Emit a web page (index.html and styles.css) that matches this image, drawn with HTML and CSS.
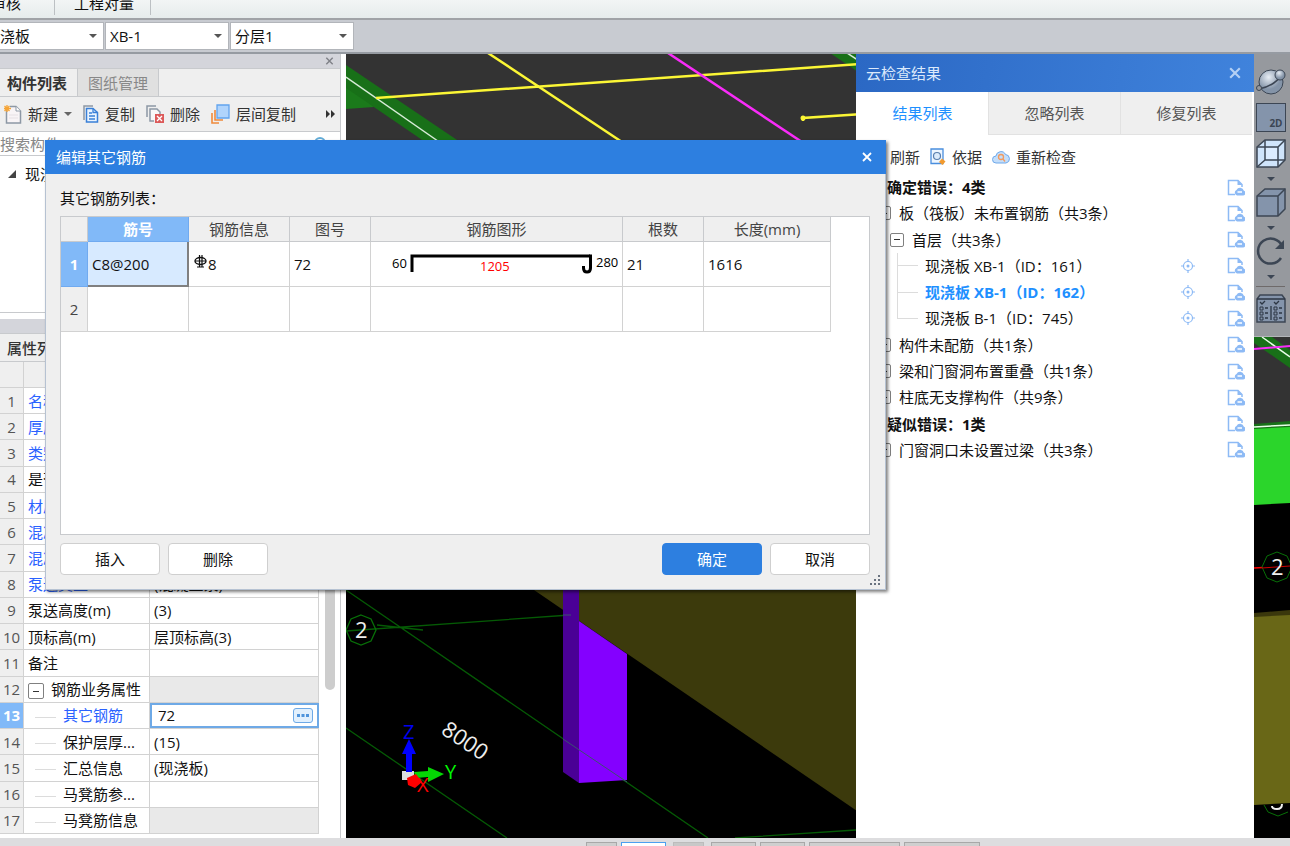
FILE: index.html
```html
<!DOCTYPE html>
<html lang="zh-CN">
<head>
    <meta charset="UTF-8">
    <meta name="viewport" content="width=device-width, initial-scale=1.0">
    <title>编辑其它钢筋</title>
    <link rel="stylesheet" href="styles.css">
</head>
<body>
    <!-- shared icons -->
    <svg class="sprite" width="0" height="0" aria-hidden="true">
        <symbol id="icon-ignore" viewBox="0 0 18 17">
            <path d="M8 15.500H1.500V1.500h9.500l4 4V8" fill="none" stroke="#8dbaf5" stroke-width="1.500"/>
            <path d="M10.500 1v5H15z" fill="#8dbaf5"/>
            <path d="M10 16.500a3 3 0 0 1-.5-5.600 4 4 0 0 1 7.400.8 2.500 2.500 0 0 1-.9 4.800z" fill="#8dbaf5"/>
            <path d="M10.500 13h4.500" stroke="#fff" stroke-width="1.500"/>
        </symbol>
        <symbol id="icon-locate" viewBox="0 0 14 14">
            <circle cx="7" cy="7" r="4.500" fill="none" stroke="#8dbaf5" stroke-width="1.200"/>
            <circle cx="7" cy="7" r="1.500" fill="#8dbaf5"/>
            <path d="M7 0v3M7 11v3M0 7h3M11 7h3" stroke="#8dbaf5" stroke-width="1.200"/>
        </symbol>
        <symbol id="icon-close" viewBox="0 0 10 10">
            <path d="M1 1l8 8M9 1L1 9" fill="none" stroke="currentColor" stroke-width="1.800"/>
        </symbol>
    </svg>

    <nav class="ribbon">
        <button>审核</button>
        <button>工程对量</button>
    </nav>

    <div class="selector-bar">
        <label class="combo"><select aria-label="构件类型"><option>现浇板</option></select></label>
        <label class="combo"><select aria-label="构件"><option>XB-1</option></select></label>
        <label class="combo"><select aria-label="分层"><option>分层1</option></select></label>
    </div>

    <main class="workspace">
        <aside class="sidebar">
            <section class="dock">
                <div class="dock-title">
                    <button aria-label="关闭"><svg width="9" height="8"><use href="#icon-close"/></svg></button>
                </div>
                <div class="dock-tabs">
                    <button class="active">构件列表</button>
                    <button>图纸管理</button>
                </div>
                <div class="toolbar">
                    <button>
                        <svg width="18" height="19" viewBox="0 0 18 19">
                            <path d="M2.500 3.500V18h14V6L12 1.500H6" fill="#f8f4f6" stroke="#8d98a5" stroke-width="1.500"/>
                            <path d="M12 1.500V6h4.500" fill="#fff" stroke="#8d98a5"/>
                            <path d="M5 10h9M5 13h9" stroke="#e6e0e4"/>
                            <path d="M3 0v7M0 3.500h7M.5 1l5 5M5.500 1l-5 5" stroke="#f6a537" stroke-width="1.300"/>
                        </svg>
                        新建<i class="caret"></i>
                    </button>
                    <button>
                        <svg width="16" height="18" viewBox="0 0 16 18">
                            <path d="M1 15V1h9" fill="none" stroke="#8d98a5" stroke-width="1.500"/>
                            <path d="M3.500 3.500H10l4.500 4V17h-11z" fill="#eaf4ff" stroke="#3a80d8" stroke-width="1.500"/>
                            <path d="M10 3.500v4h4.500M6 8h3M6 11h6M6 14h6" fill="none" stroke="#3a80d8" stroke-width="1.300"/>
                        </svg>
                        复制
                    </button>
                    <button>
                        <svg width="18" height="18" viewBox="0 0 18 18">
                            <path d="M1 12V1h9" fill="none" stroke="#8d98a5" stroke-width="1.500"/>
                            <path d="M8 16H4V4h7l3 3v3" fill="#f8f8f8" stroke="#8d98a5" stroke-width="1.500"/>
                            <path d="M9 9h9v9H9z" fill="#dc5a5a"/>
                            <path d="M11 11l5 5M16 11l-5 5" stroke="#fff" stroke-width="1.300"/>
                        </svg>
                        删除
                    </button>
                    <button>
                        <svg width="19" height="20" viewBox="0 0 19 20">
                            <path d="M1 9v10h7M4 6v10h8" fill="none" stroke="#f08a3c" stroke-width="1.600"/>
                            <path d="M6 1h12v13H6z" fill="#b0d4fc" stroke="#62a4ee" stroke-width="1.300"/>
                        </svg>
                        层间复制
                    </button>
                    <button class="more" aria-label="更多">
                        <svg width="10" height="8" viewBox="0 0 10 8"><path d="M0 0l4 4-4 4zM5 0l4 4-4 4z" fill="#333"/></svg>
                    </button>
                </div>
                <div class="search">
                    <input type="text" placeholder="搜索构件..." aria-label="搜索构件">
                    <svg width="14" height="14" viewBox="0 0 14 14"><circle cx="6" cy="6" r="5" fill="none" stroke="#62acd8" stroke-width="2"/><path d="M9 9l4 4" stroke="#62acd8" stroke-width="2"/></svg>
                </div>
                <div class="part-tree">
                    <svg width="9" height="9" viewBox="0 0 9 9"><path d="M0 8L8 0v8z" fill="#444"/></svg>
                    现浇板
                </div>
            </section>

            <section class="dock props">
                <div class="dock-title"></div>
                <div class="dock-tabs">
                    <button class="active">属性列表</button>
                </div>
                <div class="props-body">
                    <table class="props-table">
                        <colgroup><col class="col-no"><col class="col-name"><col></colgroup>
                        <thead><tr><th></th><th>属性名称</th><th>属性值</th></tr></thead>
                        <tbody>
                            <tr><th>1</th><td class="key">名称</td><td>XB-1</td></tr>
                            <tr><th>2</th><td class="key">厚度(mm)</td><td>(120)</td></tr>
                            <tr><th>3</th><td class="key">类别</td><td>有梁板</td></tr>
                            <tr><th>4</th><td>是否是楼板</td><td>是</td></tr>
                            <tr><th>5</th><td class="key">材质</td><td>混凝土</td></tr>
                            <tr><th>6</th><td class="key">混凝土类型</td><td></td></tr>
                            <tr><th>7</th><td class="key">混凝土强度</td><td></td></tr>
                            <tr><th>8</th><td class="key">泵送类型</td><td>(混凝土泵)</td></tr>
                            <tr><th>9</th><td>泵送高度(m)</td><td>(3)</td></tr>
                            <tr><th>10</th><td>顶标高(m)</td><td>层顶标高(3)</td></tr>
                            <tr><th>11</th><td>备注</td><td></td></tr>
                            <tr><th>12</th><td><button class="toggle" aria-label="折叠"></button>钢筋业务属性</td><td class="disabled"></td></tr>
                            <tr class="selected"><th>13</th><td class="child key">其它钢筋</td>
                                <td class="editing"><div class="editor"><input type="text" value="72" aria-label="其它钢筋"><button aria-label="编辑"><svg width="12" height="3" viewBox="0 0 12 3"><path d="M0 0h3v3H0zM4.500 0h3v3h-3zM9 0h3v3H9z" fill="#4f94dc"/></svg></button></div></td></tr>
                            <tr><th>14</th><td class="child">保护层厚...</td><td>(15)</td></tr>
                            <tr><th>15</th><td class="child">汇总信息</td><td>(现浇板)</td></tr>
                            <tr><th>16</th><td class="child">马凳筋参...</td><td></td></tr>
                            <tr><th>17</th><td class="child">马凳筋信息</td><td class="disabled"></td></tr>
                        </tbody>
                    </table>
                    <div class="scrollbar"><div class="thumb"></div></div>
                </div>
            </section>
        </aside>

        <section class="viewport">
            <svg class="scene" viewBox="346 54 944 784" preserveAspectRatio="xMinYMin slice">
                <rect x="346" y="54" width="944" height="784" fill="#000"/>
                <rect x="346" y="54" width="944" height="374" fill="#333"/>
                <!-- roof beams -->
                <path d="M346 83l28 24-28 2z" fill="#1b7a1b"/>
                <path d="M346 65L466 146H431L346 88z" fill="#187018"/>
                <path d="M346 77L445 146" stroke="#d8ecd8" stroke-width="1.500"/>
                <path d="M830 53h40v27z" fill="#187018"/>
                <path d="M847 53l20 13" stroke="#d8ecd8" stroke-width="1.500"/>
                <g fill="none" stroke-width="2.500">
                    <path d="M488 53L628 146M376 98L860 64M803 121v-3l60-4" stroke="#fbf635"/>
                    <path d="M668 53L808 146" stroke="#f92cf9"/>
                </g>
                <circle cx="803" cy="118" r="2.500" fill="#fbf635"/>
                <!-- grid -->
                <g fill="none" stroke="#055a05" stroke-width="1.300">
                    <path d="M346 590L708 838M346 728L507 838M346 631L570 615M377 625l46 5M735 838l121-8"/>
                    <path d="M361 615l10 4 5 11-5 11-10 4-10-4-5-11 5-11z" stroke="#087008"/>
                </g>
                <text class="axis-no" x="355" y="638">2</text>
                <!-- slab and column -->
                <path d="M534 590L860 813V580H534z" fill="#3c3a0c"/>
                <path d="M563 580h16v203l-16-11z" fill="#4a0096"/>
                <path d="M579 621l48 33v126l-48 3z" fill="#8400ff"/>
                <path d="M563 739l64 43M563 615l8 0" stroke="#3c5070"/>
                <text class="dimension" transform="translate(440 733) rotate(34)">8000</text>
                <!-- axes -->
                <path d="M402 771h12v9h-12z" fill="#ddd"/>
                <path d="M406 772v-18h-4l7-15 7 15h-4v18z" fill="#00f"/>
                <path d="M414 772l14-1v-4l16 7-16 8v-5l-12 1z" fill="#04d804"/>
                <path d="M407 778l9-4 6 8-7 6-7-3z" fill="#f00"/>
                <text class="axis" x="403" y="739" fill="#0000f0">Z</text>
                <text class="axis" x="445" y="779" fill="#00f800">Y</text>
                <text class="axis" x="417" y="792" fill="#f00">X</text>
                <!-- far right of the model -->
                <path d="M1254 337h18l18 13v18l-36-25z" fill="#187018"/>
                <path d="M1262 337l28 20" stroke="#e8ffe8" stroke-width="1.500"/>
                <path d="M1254 349l36-3" stroke="#f92cf9" stroke-width="2"/>
                <path d="M1254 424l36-3v8h-36z" fill="#187018"/>
                <path d="M1254 429l36-2v76l-36 2z" fill="#2bd52b"/>
                <path d="M1254 427l36-2" stroke="#e8ffe8" stroke-width="1.500"/>
                <path d="M1254 613l36-3v10h-36z" fill="#3a370c"/>
                <path d="M1254 617l36-2v188l-36 2z" fill="#696717"/>
                <path d="M1254 568l36-2" stroke="#f00" stroke-width="1.500"/>
                <path d="M1277 552l10 4 5 11-5 11-10 4-10-4-5-11 5-11z" fill="#000" stroke="#087008"/>
                <path d="M1262 568l28-2" stroke="#c00"/>
                <text class="axis-no" x="1271" y="575">2</text>
                <path d="M1264 805l4 7 10 4 10-4" fill="none" stroke="#087008"/>
                <path d="M1272 806q0 3 5 3t5-5" fill="none" stroke="#eee" stroke-width="2"/>
            </svg>

            <section class="check-panel">
                <header>
                    <h2>云检查结果</h2>
                    <button aria-label="关闭"><svg width="12" height="12"><use href="#icon-close"/></svg></button>
                </header>
                <div class="check-tabs">
                    <button class="active">结果列表</button>
                    <button>忽略列表</button>
                    <button>修复列表</button>
                </div>
                <div class="check-tools">
                    <button>刷新</button>
                    <button>
                        <svg width="16" height="17" viewBox="0 0 16 17">
                            <path d="M1 1h12v14.500H1z" fill="#eef6ff" stroke="#4a8ede" stroke-width="1.300"/>
                            <circle cx="7" cy="8" r="3.500" fill="#dcebfb" stroke="#5a7fae" stroke-width="1.200"/>
                            <path d="M12 10.500l3.500 3-3 3.500-3.500-3z" fill="#f29a2e"/>
                        </svg>
                        依据
                    </button>
                    <button>
                        <svg width="18" height="14" viewBox="0 0 18 14">
                            <path d="M4 13a3.500 3.500 0 0 1 0-7 5 5 0 0 1 9.500-1.500A4.300 4.300 0 0 1 14 13z" fill="#c4defa" stroke="#6ea8ea"/>
                            <circle cx="9" cy="7" r="2.500" fill="none" stroke="#f29a5e" stroke-width="1.300"/>
                            <path d="M11 9l2 2.500" stroke="#f29a5e" stroke-width="1.300"/>
                        </svg>
                        重新检查
                    </button>
                </div>
                <ul class="result-list">
                    <li class="group"><span>确定错误：4类</span><button aria-label="忽略"><svg width="18" height="17"><use href="#icon-ignore"/></svg></button></li>
                    <li class="level-1"><button class="toggle" aria-label="折叠"></button><span>板（筏板）未布置钢筋（共3条）</span><button aria-label="忽略"><svg width="18" height="17"><use href="#icon-ignore"/></svg></button></li>
                    <li class="level-2"><button class="toggle" aria-label="折叠"></button><span>首层（共3条）</span><button aria-label="忽略"><svg width="18" height="17"><use href="#icon-ignore"/></svg></button></li>
                    <li class="level-3"><span>现浇板 XB-1（ID：161）</span><button class="locate" aria-label="定位"><svg width="14" height="14"><use href="#icon-locate"/></svg></button><button aria-label="忽略"><svg width="18" height="17"><use href="#icon-ignore"/></svg></button></li>
                    <li class="level-3 current"><span>现浇板 XB-1（ID：162）</span><button class="locate" aria-label="定位"><svg width="14" height="14"><use href="#icon-locate"/></svg></button><button aria-label="忽略"><svg width="18" height="17"><use href="#icon-ignore"/></svg></button></li>
                    <li class="level-3 last"><span>现浇板 B-1（ID：745）</span><button class="locate" aria-label="定位"><svg width="14" height="14"><use href="#icon-locate"/></svg></button><button aria-label="忽略"><svg width="18" height="17"><use href="#icon-ignore"/></svg></button></li>
                    <li class="level-1"><button class="toggle" aria-label="展开"></button><span>构件未配筋（共1条）</span><button aria-label="忽略"><svg width="18" height="17"><use href="#icon-ignore"/></svg></button></li>
                    <li class="level-1"><button class="toggle" aria-label="展开"></button><span>梁和门窗洞布置重叠（共1条）</span><button aria-label="忽略"><svg width="18" height="17"><use href="#icon-ignore"/></svg></button></li>
                    <li class="level-1"><button class="toggle" aria-label="展开"></button><span>柱底无支撑构件（共9条）</span><button aria-label="忽略"><svg width="18" height="17"><use href="#icon-ignore"/></svg></button></li>
                    <li class="group"><span>疑似错误：1类</span><button aria-label="忽略"><svg width="18" height="17"><use href="#icon-ignore"/></svg></button></li>
                    <li class="level-1"><button class="toggle" aria-label="展开"></button><span>门窗洞口未设置过梁（共3条）</span><button aria-label="忽略"><svg width="18" height="17"><use href="#icon-ignore"/></svg></button></li>
                </ul>
            </section>

            <nav class="view-tools">
                <button aria-label="动态观察">
                    <svg width="32" height="28" viewBox="0 0 32 28">
                        <defs><radialGradient id="ball" cx=".4" cy=".3"><stop offset="0" stop-color="#e8eef5"/><stop offset="1" stop-color="#8494a8"/></radialGradient></defs>
                        <circle cx="16" cy="14" r="12" fill="url(#ball)" stroke="#3c4654"/>
                        <path d="M4 21Q20 18 27 6" fill="none" stroke="#3c4654" stroke-width="1.500"/>
                        <circle cx="25" cy="7" r="5" fill="url(#ball)" stroke="#3c4654"/>
                        <circle cx="4" cy="20" r="2.500" fill="#96999e" stroke="#3c4654"/>
                    </svg>
                </button>
                <button class="two-d">2D</button>
                <button class="drop" aria-label="线框">
                    <svg width="30" height="29" viewBox="0 0 30 29">
                        <path d="M1 8l8-7h20v20l-7 7H1z" fill="#cfe4fb" stroke="#3c4654" stroke-width="1.500"/>
                        <path d="M9 9h12v11H9z" fill="#dcecff"/>
                        <path d="M1 8h21v20M22 8l7-7M9 1v20h20M9 21l-8 7" fill="none" stroke="#3c4654" stroke-width="1.500"/>
                    </svg>
                </button>
                <button class="drop" aria-label="实体">
                    <svg width="30" height="29" viewBox="0 0 30 29">
                        <path d="M1 8l8-7h20v20l-7 7H1z" fill="#8494ab" stroke="#3c4654" stroke-width="1.500"/>
                        <path d="M1 8h21v20M22 8l7-7" fill="none" stroke="#3c4654" stroke-width="1.500"/>
                    </svg>
                </button>
                <button class="drop" aria-label="旋转">
                    <svg width="30" height="29" viewBox="0 0 30 29">
                        <path d="M25 21a12.500 12.500 0 1 1 1-12" fill="none" stroke="#3c4654" stroke-width="2.500"/>
                        <path d="M28 3v9H19z" fill="#3c4654"/>
                    </svg>
                </button>
                <hr>
                <button aria-label="显示设置">
                    <svg width="30" height="29" viewBox="0 0 30 29">
                        <path d="M1 5l3-4h22l3 4v23H1z" fill="#8494ab" stroke="#3c4654" stroke-width="1.500"/>
                        <path d="M1 5h28M15 12v14M4 8l2 2 3-3M18 8l2 2 3-3M9 14h3M9 19h3M9 24h3M23 14h3M23 19h3M23 24h3" fill="none" stroke="#2c3644" stroke-width="1.300"/>
                        <path d="M4 13h3v3H4zM4 18h3v3H4zM4 23h3v3H4zM18 13h3v3h-3zM18 18h3v3h-3zM18 23h3v3h-3z" fill="none" stroke="#2c3644"/>
                    </svg>
                </button>
            </nav>
        </section>
    </main>

    <footer class="status-bar">
        <button class="w-s" aria-label="捕捉"></button>
        <button class="w-m on" aria-label="正交"></button>
        <button class="w-s off" aria-label="垂点"></button>
        <button class="w-m" aria-label="中点"></button>
        <button class="w-m" aria-label="顶点"></button>
        <button class="w-l" aria-label="坐标"></button>
        <button class="w-xl" aria-label="偏移"></button>
    </footer>

    <div class="dialog" role="dialog" aria-labelledby="dialog-title">
        <header>
            <h1 id="dialog-title">编辑其它钢筋</h1>
            <button aria-label="关闭"><svg width="10" height="10"><use href="#icon-close"/></svg></button>
        </header>
        <div class="dialog-body">
            <p>其它钢筋列表：</p>
            <div class="table-box">
                <table class="rebar-table">
                    <colgroup><col class="c-no"><col class="c-name"><col class="c-info"><col class="c-code"><col class="c-shape"><col class="c-count"><col class="c-length"></colgroup>
                    <thead>
                        <tr><th></th><th class="on">筋号</th><th>钢筋信息</th><th>图号</th><th>钢筋图形</th><th>根数</th><th>长度(mm)</th></tr>
                    </thead>
                    <tbody>
                        <tr>
                            <th class="on">1</th>
                            <td class="cell-on">C8@200</td>
                            <td class="info"><svg width="13" height="14" viewBox="0 0 13 14"><ellipse cx="6.500" cy="6" rx="5.500" ry="3.500" fill="none" stroke="#111" stroke-width="1.400"/><path d="M5.500 0v12M8 0v12M3 12h7M1 6h11" stroke="#111" stroke-width="1.200"/></svg>8</td>
                            <td>72</td>
                            <td class="shape">
                                <svg width="250" height="44" viewBox="0 0 250 44">
                                    <path d="M41 30V14h178" fill="none" stroke="#000" stroke-width="3"/>
                                    <path d="M218 14h1.500v12q0 4-3.500 4t-3.500-4v-2" fill="none" stroke="#000" stroke-width="3"/>
                                    <text x="21" y="26">60</text>
                                    <text x="109" y="29" fill="#f00">1205</text>
                                    <text x="225" y="25">280</text>
                                </svg>
                            </td>
                            <td>21</td>
                            <td>1616</td>
                        </tr>
                        <tr><th>2</th><td></td><td></td><td></td><td></td><td></td><td></td></tr>
                    </tbody>
                </table>
            </div>
            <div class="actions">
                <button>插入</button>
                <button>删除</button>
                <button class="primary">确定</button>
                <button>取消</button>
            </div>
        </div>
        <svg class="grip" width="10" height="10" viewBox="0 0 10 10"><path d="M8 0h2v2H8zM4 4h2v2H4zM8 4h2v2H8zM0 8h2v2H0zM4 8h2v2H4zM8 8h2v2H8z" fill="#6a7380"/></svg>
    </div>
</body>
</html>
```

FILE: styles.css
```css
:root {
    --blue: #2d7fe0;
    --panel: #efefef;
    --line: #c8cacd;
    --select: #81b9f8;
    --link: #2a62ff;
}
* {
    box-sizing: border-box;
}
body {
    margin: 0;
    height: 100vh;
    display: flex;
    flex-direction: column;
    overflow: hidden;
    position: relative;
    font-family: "Open Sans", "Noto Sans CJK SC", sans-serif;
    font-size: 15px;
    line-height: 20px;
    color: #111;
    background: #fff;
}
button, input, select {
    font: inherit;
    color: inherit;
    margin: 0;
    padding: 0;
    border: 0;
    border-radius: 0;
    background: none;
}
h1, h2, p, ul {
    margin: 0;
    padding: 0;
    font-size: 15px;
    font-weight: normal;
}
svg {
    display: block;
    flex: none;
}
.sprite {
    position: absolute;
}

/* top bars */
.ribbon {
    height: 20px;
    flex: none;
    display: flex;
    align-items: flex-end;
    margin-left: -10px;
    padding-bottom: 3px;
    overflow: hidden;
    background: linear-gradient(#f2f5f5, #e6ecec);
    border-bottom: 2px solid #a0a3a7;
}
.ribbon button {
    height: 22px;
    line-height: 20px;
    border-right: 1px solid #bcc0c3;
    padding: 0 16px 2px 19px;
}
.ribbon button:first-child {
    padding: 0 33px 2px 1px;
}
.selector-bar {
    height: 34px;
    flex: none;
    display: flex;
    align-items: center;
    gap: 1px;
    margin-left: -20px;
    background: #c8cbd1;
    border-bottom: 2px solid #969ba2;
}
.combo {
    display: grid;
    align-items: center;
    width: 124px;
}
.combo select {
    grid-area: 1 / 1;
    appearance: none;
    height: 28px;
    padding: 0 4px;
    background: #fff;
    border: 1px solid #b2b5ba;
}
.combo::after {
    content: "";
    grid-area: 1 / 1;
    justify-self: end;
    margin-right: 7px;
    border: 4px solid transparent;
    border-top-color: #555;
    border-bottom: 0;
    pointer-events: none;
}

/* left side */
.workspace {
    flex: 1;
    min-height: 0;
    display: flex;
    gap: 5px;
}
.sidebar {
    width: 341px;
    flex: none;
    display: flex;
    flex-direction: column;
    gap: 6px;
    border-right: 1px solid var(--line);
}
.dock-title {
    height: 15px;
    display: flex;
    justify-content: flex-end;
    align-items: center;
    padding-right: 6px;
    color: #808288;
    background: #d4d5db;
    border-bottom: 1px solid var(--line);
}
.dock-tabs {
    height: 28px;
    display: flex;
    background: var(--panel);
    border-bottom: 1px solid var(--line);
}
.dock-tabs button {
    padding: 0 10px;
    color: #888;
    background: #e0e0e0;
    border-right: 1px solid var(--line);
}
.dock-tabs .active {
    padding-left: 7px;
    font-weight: bold;
    color: #333;
    background: var(--panel);
}
.toolbar {
    height: 35px;
    display: flex;
    align-items: center;
    gap: 11px;
    padding: 0 4px;
    color: #333;
    background: var(--panel);
    border-bottom: 1px solid var(--line);
}
.toolbar button {
    display: flex;
    align-items: center;
    gap: 6px;
}
.toolbar .more {
    margin-left: auto;
}
.caret {
    border: 4px solid transparent;
    border-top-color: #666;
    border-bottom: 0;
}
.search {
    height: 24px;
    display: flex;
    align-items: center;
    padding-right: 12px;
    background: #fff;
    border-bottom: 1px solid var(--line);
}
.search input {
    flex: 1;
    min-width: 0;
}
.search input::placeholder {
    color: #888;
}
.part-tree {
    height: 157px;
    display: flex;
    align-items: flex-start;
    gap: 8px;
    padding: 8px;
    border-bottom: 1px solid var(--line);
}
.part-tree svg {
    margin-top: 6px;
}
.props {
    flex: 1;
    min-height: 0;
    display: flex;
    flex-direction: column;
}
.props .dock-title, .props .dock-tabs {
    flex: none;
}
.props .dock-tabs .active {
    font-weight: 500;
}
.props-body {
    flex: 1;
    min-height: 0;
    display: flex;
    padding-bottom: 4px;
}
.props-table {
    width: 319px;
    height: 100%;
    flex: none;
    table-layout: fixed;
    border-collapse: separate;
    border-spacing: 0;
}
.col-no {
    width: 24px;
}
.col-name {
    width: 126px;
}
.props-table th, .props-table td {
    height: 26px;
    padding: 0 4px;
    line-height: 20px;
    text-align: left;
    white-space: nowrap;
    overflow: hidden;
    border-right: 1px solid #d2d2d2;
    border-bottom: 1px solid #d2d2d2;
}
.props-table th {
    padding: 0;
    font-weight: normal;
    text-align: center;
    color: #555;
    background: var(--panel);
}
.props-table .key {
    color: var(--link);
}
.props-table .disabled {
    background: #e9e9e9;
}
.props-table .selected th {
    color: #fff;
    font-weight: bold;
    background: var(--select);
}
.props-table .child::before {
    content: "";
    display: inline-block;
    width: 21px;
    margin: 0 7px;
    border-top: 1px solid #dcdcdc;
    vertical-align: middle;
}
.props-table .editing {
    padding: 0;
    border-right: 0;
}
.editor {
    display: flex;
    align-items: center;
    height: 25px;
    padding: 0 4px 0 6px;
    border: 2px solid #6ea9e6;
}
.editor input {
    flex: 1;
    min-width: 0;
}
.editor button {
    width: 20px;
    height: 15px;
    display: flex;
    align-items: center;
    justify-content: center;
    background: #e2f0fd;
    border: 1px solid #6ea9e6;
    border-radius: 3px;
}
.toggle {
    width: 14px;
    height: 14px;
    flex: none;
    display: inline-flex;
    align-items: center;
    justify-content: center;
    vertical-align: middle;
    background: #fff;
    border: 1px solid #808080;
    border-radius: 2px;
}
.toggle::before {
    content: "";
    width: 6px;
    height: 1px;
    background: #333;
}
.props-table .toggle {
    width: 16px;
    height: 16px;
    margin-right: 7px;
}
.scrollbar {
    flex: 1;
    padding: 0 5px 144px 6px;
}
.thumb {
    height: 100%;
    border-radius: 5px;
    background: #cdcdcd;
}

/* 3D view */
.viewport {
    flex: 1;
    min-width: 0;
    position: relative;
    display: flex;
    justify-content: flex-end;
    align-items: flex-start;
    overflow: hidden;
    background: #000;
}
.scene {
    position: absolute;
    inset: 0;
    width: 100%;
    height: 100%;
}
.axis-no, .dimension {
    font-size: 22px;
    fill: #eee;
}
.axis {
    font-size: 20px;
}

/* check results */
.check-panel {
    position: relative;
    width: 398px;
    height: 100%;
    background: #fff;
}
.check-panel header {
    height: 38px;
    display: flex;
    align-items: center;
    justify-content: space-between;
    padding: 0 13px 0 10px;
    color: #dbe9fb;
    background: linear-gradient(100deg, #2b68c4, #4083dc);
}
.check-panel header button {
    color: #b4d0f4;
}
.check-tabs {
    height: 43px;
    display: grid;
    grid-template-columns: repeat(3, 1fr);
    padding-right: 2px;
}
.check-tabs button {
    color: #555;
    background: var(--panel);
    border-left: 1px solid #e2e2e2;
    border-bottom: 1px solid #e2e2e2;
}
.check-tabs .active {
    color: #1e90ff;
    background: #fff;
    border-color: #fff;
}
.check-tools {
    height: 39px;
    display: flex;
    align-items: center;
    gap: 10px;
    padding: 4px 0 0 34px;
    color: #333;
}
.check-tools button {
    display: flex;
    align-items: center;
    gap: 6px;
}
.result-list {
    height: 289px;
    display: grid;
    grid-auto-rows: 1fr;
    list-style: none;
}
.result-list li {
    display: flex;
    align-items: center;
    padding: 0 9px 0 31px;
}
.result-list li span {
    flex: 1;
    white-space: nowrap;
}
.result-list .toggle {
    margin-right: 8px;
}
.result-list .locate {
    margin-right: 32px;
}
.result-list .group {
    font-weight: bold;
}
.result-list .level-1 {
    padding-left: 21px;
}
.result-list .level-2 {
    padding-left: 34px;
}
.result-list .level-3 {
    padding-left: 41px;
}
.level-3::before {
    content: "";
    width: 20px;
    margin-right: 7px;
    align-self: stretch;
    border-left: 1px solid #dcdcdc;
    background: linear-gradient(#dcdcdc, #dcdcdc) center / 100% 1px no-repeat;
}
.result-list .last::before {
    align-self: flex-start;
    height: 14px;
    background-position: bottom;
}
.result-list .current {
    color: #1e90ff;
    font-weight: bold;
}

/* view toolbar */
.view-tools {
    position: relative;
    width: 36px;
    height: 283px;
    display: flex;
    flex-direction: column;
    align-items: center;
    gap: 7px;
    padding: 14px 3px 0 0;
    background: #96999e;
    border-bottom: 1px solid #b4b6ba;
}
.view-tools .two-d {
    width: 30px;
    height: 29px;
    padding: 10px 2px 0 0;
    font-size: 10px;
    line-height: 16px;
    font-weight: bold;
    text-align: right;
    color: #3c4654;
    background: #8494ab;
    border: 1px solid #3c4654;
}
.view-tools .drop::after {
    content: "";
    display: block;
    width: 0;
    margin: 9px auto 0;
    border: 4px solid transparent;
    border-top-color: #3c4654;
    border-bottom: 0;
}
.view-tools hr {
    width: 29px;
    margin: 0;
    border: 0;
    border-top: 1px solid #6e6a6a;
}

/* status bar */
.status-bar {
    height: 8px;
    flex: none;
    display: flex;
    gap: 4px;
    padding: 4px 0 0 586px;
    overflow: hidden;
    background: #dddddf;
}
.status-bar button {
    height: 24px;
    flex: none;
    background: #cfcfcf;
    border: 1px solid #a8a8a8;
}
.status-bar .w-s {
    width: 31px;
}
.status-bar .w-m {
    width: 45px;
}
.status-bar .w-l {
    width: 91px;
}
.status-bar .w-xl {
    width: 76px;
}
.status-bar .on {
    background: #fff;
    border-color: #4ba0f0;
}
.status-bar .off {
    margin: 0 3px;
    background: #c8c8c8;
    border-color: #bcbcbc;
}

/* dialog */
.dialog {
    position: absolute;
    left: 45px;
    top: 140px;
    width: 841px;
    background: var(--panel);
    border: 1px solid #b6c2d2;
    border-top: 0;
    box-shadow: 2px 2px 3px rgba(0, 0, 0, 0.5);
}
.dialog header {
    height: 34px;
    display: flex;
    align-items: center;
    justify-content: space-between;
    margin: 0 -1px;
    padding: 0 14px 0 11px;
    color: #fff;
    background: var(--blue);
}
.dialog-body {
    padding: 14px 15px 14px 14px;
}
.table-box {
    height: 319px;
    margin-top: 8px;
    background: #fff;
    border: 1px solid var(--line);
}
.rebar-table {
    table-layout: fixed;
    border-collapse: separate;
    border-spacing: 0;
    width: 770px;
}
.c-no {
    width: 27px;
}
.c-name, .c-info {
    width: 101px;
}
.c-code, .c-count {
    width: 81px;
}
.c-shape {
    width: 252px;
}
.c-length {
    width: 127px;
}
.rebar-table th, .rebar-table td {
    padding: 0 4px;
    height: 45px;
    border-right: 1px solid #d2d2d2;
    border-bottom: 1px solid #d2d2d2;
}
.rebar-table th {
    font-weight: normal;
    color: #444;
    background: var(--panel);
}
.rebar-table tbody th {
    padding: 0;
}
.rebar-table thead th {
    height: 25px;
    line-height: 20px;
    border-color: var(--line);
}
.rebar-table .on {
    color: #fff;
    font-weight: bold;
    background: var(--select);
    border-color: #70aaf0;
}
.rebar-table .cell-on {
    background: #d7eaff;
    border-right: 2px solid #808080;
    border-bottom: 2px solid #808080;
}
.info svg {
    display: inline-block;
    margin: 0 1px;
    vertical-align: 1px;
}
.rebar-table .shape {
    padding: 0;
}
.shape text {
    font-size: 13px;
}
.actions {
    display: flex;
    gap: 8px;
    margin-top: 8px;
}
.actions button {
    width: 100px;
    height: 32px;
    background: #fff;
    border: 1px solid #cfcfcf;
    border-radius: 4px;
}
.actions .primary {
    margin-left: auto;
    color: #fff;
    background: var(--blue);
    border-color: var(--blue);
}
.grip {
    position: absolute;
    right: 5px;
    bottom: 4px;
}
```
